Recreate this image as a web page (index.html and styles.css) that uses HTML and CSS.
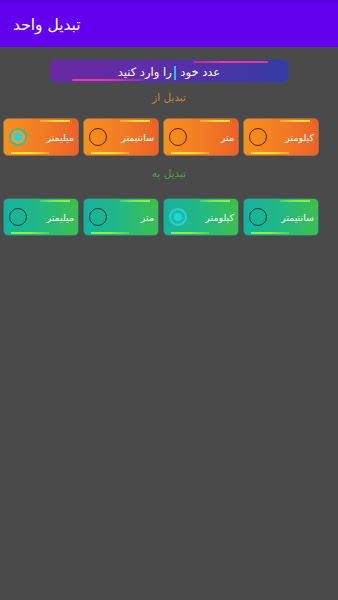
FILE: index.html
```html
<!DOCTYPE html>
<html lang="fa">
<head>
  <meta charset="UTF-8">
  <meta name="viewport" content="width=device-width, initial-scale=1.0">
  <title>تبدیل واحد</title>
  <link rel="stylesheet" href="styles.css">
</head>
<body>

  <header class="app-bar">
    <h1 class="app-title">تبدیل واحد</h1>
  </header>

  <main class="content">
    <div class="number-input">
      <span class="line line-top"></span>
      <span class="hint">عدد خود <span class="cursor"></span>را وارد کنید</span>
      <span class="line line-bottom"></span>
    </div>

    <p class="section-label from">تبدیل از</p>
    <div class="unit-row orange">
      <div class="unit-card"><span class="radio checked"></span><span class="unit-name">میلیمتر</span></div>
      <div class="unit-card"><span class="radio"></span><span class="unit-name">سانتیمتر</span></div>
      <div class="unit-card"><span class="radio"></span><span class="unit-name">متر</span></div>
      <div class="unit-card"><span class="radio"></span><span class="unit-name">کیلومتر</span></div>
    </div>

    <p class="section-label to">تبدیل به</p>
    <div class="unit-row green">
      <div class="unit-card"><span class="radio"></span><span class="unit-name">میلیمتر</span></div>
      <div class="unit-card"><span class="radio"></span><span class="unit-name">متر</span></div>
      <div class="unit-card"><span class="radio checked"></span><span class="unit-name">کیلومتر</span></div>
      <div class="unit-card"><span class="radio"></span><span class="unit-name">سانتیمتر</span></div>
    </div>
  </main>

</body>
</html>
```

FILE: styles.css
```css
/* Global Reset */
* {
  margin: 0;
  padding: 0;
  box-sizing: border-box;
}

body {
  font-family: 'DejaVu Sans', 'Noto Sans', sans-serif;
  background-color: #4a4a4a;
  color: #fff;
  min-height: 100vh;
}

/* App Bar */
.app-bar {
  height: 47px;
  background-color: #6200ee;
  border-top: 2px solid #5700d6;
  display: flex;
  align-items: center;
  padding-left: 13px;
}

.app-title {
  font-size: 15.5px;
  font-weight: normal;
  direction: rtl;
}

/* Main Content */
.content {
  display: flex;
  flex-direction: column;
  align-items: center;
  padding-top: 12px;
}

/* Number Input */
.number-input {
  position: relative;
  width: 240px;
  height: 24px;
  border: 1px solid #3b4a78;
  border-radius: 6px;
  background: linear-gradient(to right, #6a2aa2, #5a2ea8 50%, #343ca4);
  text-align: center;
  line-height: 22px;
}

.hint {
  font-size: 11.5px;
  direction: rtl;
  unicode-bidi: isolate;
}

.cursor {
  display: inline-block;
  width: 2px;
  height: 14px;
  background-color: #27c4e0;
  vertical-align: middle;
  margin: 0 1px 0 2px;
}

.line {
  position: absolute;
  height: 2px;
  border-radius: 1px;
}

.line-top {
  top: 1px;
  left: 143px;
  width: 75px;
  background: linear-gradient(to right, #b0308a, #f03a8a 40%, #e23a8c);
}

.line-bottom {
  bottom: 1px;
  left: 22px;
  width: 72px;
  background: linear-gradient(to right, #f03a90, #e83a90 50%, rgba(200, 60, 160, 0.4));
}

/* Section Labels */
.section-label {
  font-size: 10.5px;
  direction: rtl;
}

.section-label.from {
  color: #c8883a;
  margin: 8px 0 15px;
}

.section-label.to {
  color: #4aa244;
  margin: 11px 0 19px;
}

/* Unit Cards */
.unit-row {
  display: flex;
  gap: 4px;
  align-self: flex-start;
  margin-left: 3px;
}

.unit-card {
  position: relative;
  width: 76px;
  height: 38px;
  border-radius: 5px;
  display: flex;
  align-items: center;
  justify-content: space-between;
  padding: 0 4px 0 5px;
}

.unit-card::before,
.unit-card::after {
  content: "";
  position: absolute;
  height: 2px;
}

.unit-card::before {
  top: 1px;
  right: 8px;
  width: 30px;
}

.unit-card::after {
  bottom: 1px;
  left: 7px;
  width: 38px;
}

.unit-name {
  font-size: 9.5px;
  direction: rtl;
}

.radio {
  width: 18px;
  height: 18px;
  border-radius: 50%;
  border: 1.5px solid;
  flex-shrink: 0;
  position: relative;
}

.radio.checked::after {
  content: "";
  position: absolute;
  top: 3px;
  left: 3px;
  width: 8px;
  height: 8px;
  border-radius: 50%;
}

/* Orange Row */
.orange .unit-card {
  background: linear-gradient(to right, #f7901e, #f17a24 55%, #ec6128);
  border: 1.5px solid #9b6a4a;
}

.orange .unit-card::before {
  background: linear-gradient(to right, #f3a81a, #e6e22a 60%, #e8e030);
}

.orange .unit-card::after {
  background: linear-gradient(to right, #f2e52a 50%, rgba(242, 200, 40, 0.5));
}

.orange .radio {
  border-color: #5a2408;
}

.orange .radio.checked {
  border: 2px solid #2ec2a0;
  background-color: #f39a30;
}

.orange .radio.checked::after {
  background-color: #1ad8e8;
}

/* Green Row */
.green .unit-card {
  background: linear-gradient(to right, #14b39e, #22b882 50%, #3ec04c);
  border: 1.5px solid #3e6e66;
}

.green .unit-card::before {
  background: linear-gradient(to right, #44d060, #8cf03a 60%, #8cf03a);
}

.green .unit-card::after {
  background: linear-gradient(to right, #8cf03a 50%, rgba(120, 230, 60, 0.5));
}

.green .radio {
  border-color: #0d3e44;
}

.green .radio.checked {
  border: 2px solid #2cd2cc;
  background-color: #1bbaa6;
}

.green .radio.checked::after {
  background-color: #22d6d8;
}
```
